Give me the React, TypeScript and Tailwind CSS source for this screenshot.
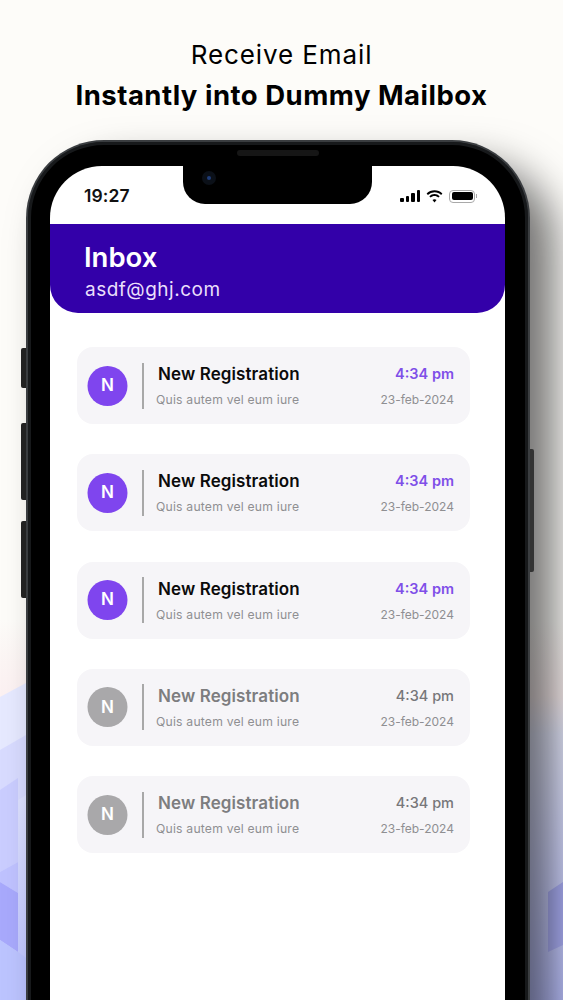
const MAILS = [
  { id: 1, unread: true },
  { id: 2, unread: true },
  { id: 3, unread: true },
  { id: 4, unread: false },
  { id: 5, unread: false },
];

// soft hexagon pattern behind the phone, bottom of the page
function Backdrop() {
  return (
    <svg className="absolute left-0 top-[600px] h-[400px] w-[563px]" viewBox="0 0 563 400" fill="none">
      <defs>
        <linearGradient id="fade" x1="0" y1="0" x2="0" y2="1">
          <stop offset="0" stopColor="#fbeeee" stopOpacity="0" />
          <stop offset="0.2" stopColor="#fcf1f2" />
          <stop offset="0.3" stopColor="#e8ebff" />
          <stop offset="1" stopColor="#bcc2ff" />
        </linearGradient>
      </defs>
      <rect x="0" y="20" width="563" height="380" fill="url(#fade)" />
      <polygon points="0,97 26,83 26,135 0,150" fill="#e6e9ff" />
      <polygon points="0,150 26,135 26,195 18,200 0,190" fill="#d8dbff" />
      <polygon points="0,190 18,178 18,262 0,272" fill="#cacdff" />
      <polygon points="0,272 18,262 18,293 0,282" fill="#bfc2ff" />
      <polygon points="0,282 18,293 18,352 0,340" fill="#a8a9fc" />
      <polygon points="0,340 18,352 26,358 26,400 0,400" fill="#bcc4ff" />
      <polygon points="548,292 563,282 563,345 548,352" fill="#aeb2fa" />
    </svg>
  );
}

function SignalBars() {
  return (
    <div className="flex items-end gap-[2px]">
      <div className="h-[4px] w-[3.5px] rounded-[1px] bg-black" />
      <div className="h-[6px] w-[3.5px] rounded-[1px] bg-black" />
      <div className="h-[9px] w-[3.5px] rounded-[1px] bg-black" />
      <div className="h-[12px] w-[3.5px] rounded-[1px] bg-black" />
    </div>
  );
}

function StatusIcons() {
  return (
    <div className="flex items-center gap-[6px]">
      <SignalBars />
      <svg width="17" height="13" viewBox="0 0 17 13" fill="#000">
        <path d="M8.5 2.2c2.6 0 4.9 1 6.6 2.7l1.3-1.4A11.2 11.2 0 0 0 8.5.2 11.2 11.2 0 0 0 .6 3.5l1.3 1.4a9.3 9.3 0 0 1 6.6-2.7Z" />
        <path d="M8.5 6c1.5 0 2.9.6 3.9 1.6l1.3-1.4a7.4 7.4 0 0 0-10.4 0l1.3 1.4c1-1 2.4-1.6 3.9-1.6Z" />
        <path d="M8.5 9.2c-.8 0-1.5.3-2 .8l2 2.6 2-2.6c-.5-.5-1.2-.8-2-.8Z" />
      </svg>
      <div className="flex items-center">
        <div className="h-[13px] w-[26px] rounded-[4px] border border-[#a9a9a9] p-[1.5px]">
          <div className="h-full w-full rounded-[2px] bg-black" />
        </div>
        <div className="ml-[1px] h-[4px] w-[1px] bg-[#a9a9a9]" />
      </div>
    </div>
  );
}

function MailRow({ unread }: { unread: boolean }) {
  return (
    <div className="flex h-[77px] items-center rounded-[16px] bg-[#f6f5f8] pl-[11px] pr-[16px]">
      <div
        className={
          unread
            ? "flex h-10 w-10 shrink-0 -translate-x-[0.5px] items-center justify-center rounded-full bg-[#7f45ee] text-[17px] font-semibold text-white"
            : "flex h-10 w-10 shrink-0 -translate-x-[0.5px] items-center justify-center rounded-full bg-[#a9a8aa] text-[17px] font-semibold text-white"
        }
      >
        N
      </div>
      <div className="ml-[14px] h-[46px] w-[2px] shrink-0 bg-[#a8a8a8]" />
      <div className="ml-[12px] flex min-w-0 flex-1 flex-col">
        <div
          className={
            unread
              ? "ml-[2px] text-[17px] font-semibold leading-[22px] tracking-[0.1px] text-[#0b0b0b]"
              : "ml-[2px] text-[17px] font-semibold leading-[22px] tracking-[0.1px] text-[#7d7d7f]"
          }
        >
          New Registration
        </div>
        <div className="mt-[7px] text-[12.2px] leading-[16px] tracking-[0.2px] text-[#8f8f92]">Quis autem vel eum iure</div>
      </div>
      <div className="flex shrink-0 flex-col items-end">
        <div
          className={
            unread
              ? "text-[14.5px] font-semibold leading-[22px] text-[#7f4fe8]"
              : "text-[14.5px] font-medium leading-[22px] text-[#77777a]"
          }
        >
          4:34 pm
        </div>
        <div className="mt-[7px] text-[12px] leading-[16px] text-[#8f8f92]">23-feb-2024</div>
      </div>
    </div>
  );
}

export default function App() {
  return (
    <div className="relative h-[1000px] w-[563px] overflow-hidden bg-[#fdfcf9] font-['Inter',sans-serif]">
      <Backdrop />

      <div className="relative pt-[38px] text-center text-black">
        <div className="text-[26px] leading-[34px] tracking-[0.9px]">Receive Email</div>
        <div className="mt-[6px] text-[27.5px] font-bold leading-[34px] tracking-[0.5px]">Instantly into Dummy Mailbox</div>
      </div>

      {/* phone */}
      <div className="relative ml-[26px] mt-[28px] h-[900px] w-[504px] rounded-t-[78px] border-x-2 border-t-2 border-[#3a3d40] bg-black pl-[22px] pr-[23px] pt-[24px] shadow-[24px_24px_40px_rgba(0,0,0,0.55),inset_0_0_0_3px_#17191b]">
        <div className="absolute -left-[7px] top-[206px] h-[40px] w-[5px] rounded-l-[2px] bg-[#222]" />
        <div className="absolute -left-[7px] top-[281px] h-[77px] w-[5px] rounded-l-[2px] bg-[#222]" />
        <div className="absolute -left-[7px] top-[379px] h-[77px] w-[5px] rounded-l-[2px] bg-[#222]" />
        <div className="absolute -right-[6px] top-[307px] h-[123px] w-[4px] rounded-r-[2px] bg-[#333]" />
        <div className="absolute left-[209px] top-[8px] z-10 h-[6px] w-[82px] rounded-full bg-[#161616]" />

        <div className="relative h-full overflow-hidden rounded-t-[52px] bg-white">
          {/* notch */}
          <div className="absolute left-[133px] top-0 h-[38px] w-[189px] rounded-b-[22px] bg-black pl-[19px]">
            <div className="mt-[5px] h-[14px] w-[14px] rounded-full bg-[#0b1018] p-[5px]">
              <div className="h-[4px] w-[4px] rounded-full bg-[#1f3d7a]" />
            </div>
          </div>

          <div className="flex h-[58px] items-center justify-between pl-[34px] pr-[28px] pt-[2px]">
            <span className="text-[17.5px] font-semibold tracking-[0.1px] text-[#111]">19:27</span>
            <StatusIcons />
          </div>

          <div className="h-[89px] rounded-b-[28px] bg-[#3300a9] pl-[34px] pt-[15px] text-white">
            <div className="text-[27.5px] font-semibold leading-[36px]">Inbox</div>
            <div className="mt-[2px] pl-[1px] text-[19px] leading-[26px] tracking-[0.5px] text-[#eadffb]">asdf@ghj.com</div>
          </div>

          <div className="flex flex-col gap-[30.3px] pl-[27px] pr-[35px] pt-[34px]">
            {MAILS.map((m) => (
              <MailRow key={m.id} unread={m.unread} />
            ))}
          </div>
        </div>
      </div>
    </div>
  );
}
